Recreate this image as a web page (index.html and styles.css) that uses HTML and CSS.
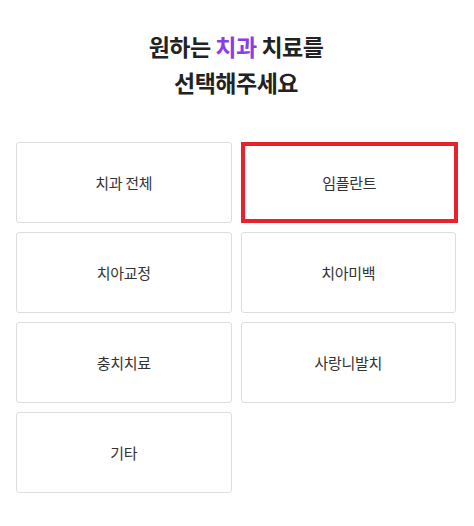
FILE: index.html
```html
<!DOCTYPE html>
<html>
<head>
    <title>치과 치료 선택</title>
    <link rel="stylesheet" href="styles.css">
</head>
<body>
    <div class="container">
        <h1 class="title">원하는 <span class="accent">치과</span> 치료를<br>선택해주세요</h1>

        <div class="option-grid">
            <button class="option">치과 전체</button>
            <button class="option selected">임플란트</button>
            <button class="option">치아교정</button>
            <button class="option">치아미백</button>
            <button class="option">충치치료</button>
            <button class="option">사랑니발치</button>
            <button class="option">기타</button>
        </div>
    </div>
</body>
</html>
```

FILE: styles.css
```css
body {
    font-family: "Noto Sans CJK KR", "Noto Sans", sans-serif;
    margin: 0;
    background-color: #fff;
}
.container {
    width: 440px;
    padding: 28px 0 0 16px;
}
.title {
    margin: 0 0 42px;
    font-size: 23px;
    font-weight: 700;
    line-height: 36px;
    color: #222;
    text-align: center;
    letter-spacing: -0.5px;
}
.accent {
    color: #8a3de6;
}
.option-grid {
    display: grid;
    grid-template-columns: 1fr 1fr;
    gap: 9px;
}
.option {
    height: 81px;
    box-sizing: border-box;
    background-color: #fff;
    border: 1px solid #ddd;
    border-radius: 3px;
    font-family: inherit;
    font-size: 15px;
    color: #333;
    letter-spacing: -0.3px;
    cursor: pointer;
}
.option.selected {
    border: 4px solid #e8222c;
    border-radius: 0;
    margin-right: -2px;
}
```
